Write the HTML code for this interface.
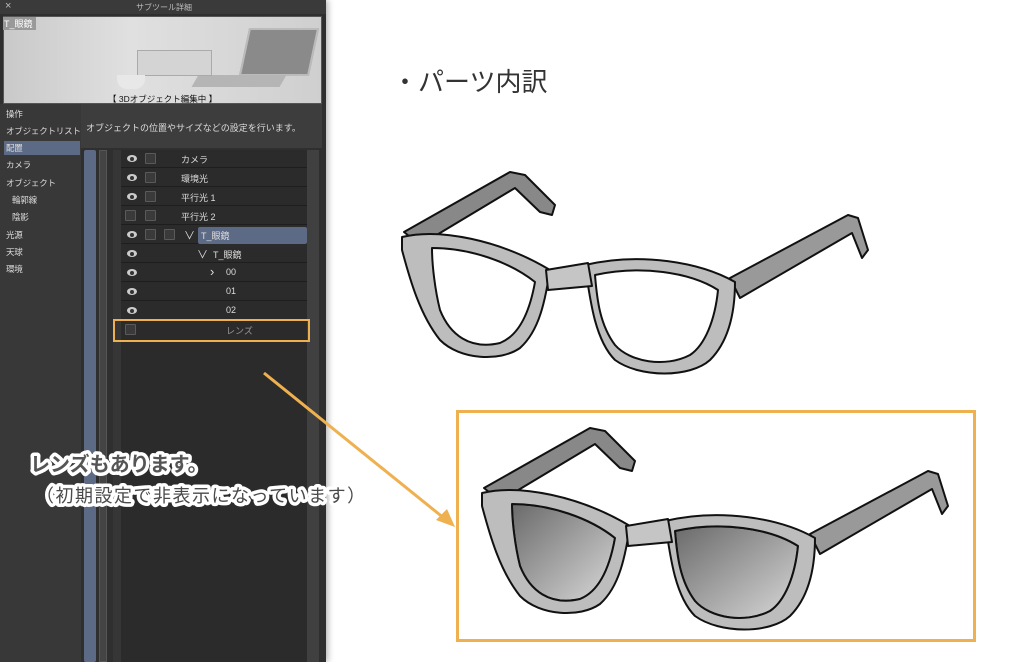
<!DOCTYPE html>
<html><head><meta charset="utf-8"><style>
*{margin:0;padding:0;box-sizing:border-box}
body{width:1024px;height:662px;overflow:hidden;background:#fff;position:relative;font-family:"Liberation Sans","Noto Sans CJK JP",sans-serif}
.abs{position:absolute}
.panel{left:0;top:0;width:326px;height:662px;background:#2f2f2f;box-shadow:2px 0 6px rgba(0,0,0,.3)}
.t{color:#ddd;font-size:9px;white-space:nowrap}
.row{position:absolute;left:121px;width:186px;height:18px;background:#2b2b2b;border-bottom:1px solid #1e1e1e}
.eye{position:absolute;top:5px;width:10px;height:7px;border-radius:50%;background:#ccc;left:6px}
.eye:after{content:"";position:absolute;left:3px;top:1.5px;width:4px;height:4px;border-radius:50%;background:#333}
.cb{position:absolute;top:3px;width:11px;height:11px;border:1px solid #5a5a5a;background:#3a3a3a;border-radius:1px}
.lbl{position:absolute;top:3px;color:#ddd;font-size:9px}
.nav{position:absolute;left:6px;color:#ddd;font-size:8.5px;white-space:nowrap;letter-spacing:-0.2px}
</style></head><body>
<div class="abs panel"></div>
<div class="abs" style="left:0;top:0;width:326px;height:14px;background:#3a3a3a"></div>
<div class="abs t" style="left:5px;top:0px;font-size:11px;color:#bbb">×</div>
<div class="abs t" style="left:136px;top:2px;color:#bbb;font-size:8px">サブツール詳細</div>
<div class="abs" style="left:3px;top:16px;width:319px;height:88px;background:linear-gradient(90deg,#c9c9c9,#e0e0e0 40%,#cfcfcf);border:1px solid #555"></div>
<div class="abs" style="left:244px;top:28px;width:70px;height:48px;background:#8a8a8a;transform:skewX(-12deg);border:2px solid #bbb"></div>
<div class="abs" style="left:195px;top:75px;width:88px;height:12px;background:#b5b5b5;transform:skewX(-30deg)"></div>
<div class="abs" style="left:137px;top:50px;width:75px;height:26px;background:#d4d4d4;border:1px solid #aaa"></div>
<div class="abs" style="left:117px;top:75px;width:28px;height:14px;background:#e8e8e8;border-radius:0 0 10px 10px"></div>
<div class="abs" style="left:3px;top:17px;width:33px;height:13px;background:#999;color:#fff;font-size:9px;padding-left:1px">T_眼鏡</div>
<div class="abs" style="left:108px;top:93px;font-size:8.5px;color:#111">【 3Dオブジェクト編集中 】</div>
<div class="abs" style="left:0;top:104px;width:81px;height:558px;background:#383838"></div>
<div class="nav" style="top:108px">操作</div>
<div class="nav" style="top:125px">オブジェクトリスト</div>
<div class="abs" style="left:4px;top:141px;width:76px;height:14px;background:#5d6a86"></div>
<div class="nav" style="top:142px">配置</div>
<div class="nav" style="top:159px">カメラ</div>
<div class="nav" style="top:177px">オブジェクト</div>
<div class="nav" style="top:194px;left:12px">輪郭線</div>
<div class="nav" style="top:211px;left:12px">陰影</div>
<div class="nav" style="top:229px">光源</div>
<div class="nav" style="top:246px">天球</div>
<div class="nav" style="top:263px">環境</div>
<div class="abs" style="left:81px;top:104px;width:241px;height:44px;background:#3d3d3d"></div>
<div class="abs t" style="left:86px;top:121px">オブジェクトの位置やサイズなどの設定を行います。</div>
<div class="abs" style="left:84px;top:150px;width:12px;height:512px;background:#5d6a86;border-radius:2px"></div>
<div class="abs" style="left:99px;top:150px;width:8px;height:512px;background:#444;border:1px solid #555"></div>
<div class="abs" style="left:113px;top:150px;width:8px;height:512px;background:#363636"></div>
<div class="abs" style="left:307px;top:150px;width:12px;height:512px;background:#404040"></div>
<div class="abs" style="left:121px;top:150px;width:186px;height:512px;background:#2b2b2b"></div>
<div class="row" style="top:150px"><div class="eye"></div><div class="cb" style="left:24px"></div><div class="lbl" style="left:60px">カメラ</div></div>
<div class="row" style="top:169px"><div class="eye"></div><div class="cb" style="left:24px"></div><div class="lbl" style="left:60px">環境光</div></div>
<div class="row" style="top:188px"><div class="eye"></div><div class="cb" style="left:24px"></div><div class="lbl" style="left:60px">平行光 1</div></div>
<div class="row" style="top:207px"><div class="cb" style="left:4px"></div><div class="cb" style="left:24px"></div><div class="lbl" style="left:60px">平行光 2</div></div>
<div class="row" style="top:226px"><div class="eye"></div><div class="cb" style="left:24px"></div><div class="cb" style="left:43px"></div><div class="lbl" style="left:63px;top:1px;font-size:11px">∨</div><div style="position:absolute;left:77px;top:1px;width:109px;height:17px;background:#5d6a86;border-radius:2px"></div><div class="lbl" style="left:80px">T_眼鏡</div></div>
<div class="row" style="top:245px"><div class="eye"></div><div class="lbl" style="left:76px;top:1px;font-size:11px">∨</div><div class="lbl" style="left:92px">T_眼鏡</div></div>
<div class="row" style="top:264px"><div class="eye"></div><div class="lbl" style="left:89px;top:0px;font-size:13px">›</div><div class="lbl" style="left:105px">00</div></div>
<div class="row" style="top:283px"><div class="eye"></div><div class="lbl" style="left:105px">01</div></div>
<div class="row" style="top:302px"><div class="eye"></div><div class="lbl" style="left:105px">02</div></div>
<div class="row" style="top:321px;border:none"><div class="cb" style="left:4px"></div><div class="lbl" style="left:105px;color:#999">レンズ</div></div>
<div class="abs" style="left:113px;top:319px;width:197px;height:23px;border:2.5px solid #efb04f"></div>
<div class="abs" style="left:392px;top:62px;font-size:26px;color:#333">・パーツ内訳</div>
<div class="abs" style="left:456px;top:410px;width:520px;height:232px;border:3px solid #efb04f"></div>
<svg class="abs" style="left:0;top:0" width="1024" height="662">
<g font-family="Liberation Sans, Noto Sans CJK JP, sans-serif" stroke="#fff" stroke-width="7" stroke-linejoin="round" paint-order="stroke" fill="#4a4a4a">
<text x="30" y="471" font-size="20" font-weight="bold" fill="#555">レンズもあります。</text>
<text x="36" y="502" font-size="18" letter-spacing="1.5">（初期設定で非表示になっています）</text>
</g>
<line x1="264" y1="373" x2="450" y2="523" stroke="#efb04f" stroke-width="3"/>
<polygon points="455,527 436,520 447,509" fill="#efb04f"/>
<defs><linearGradient id="ln" x1="0" y1="0" x2="1" y2="1"><stop offset="0" stop-color="#6a6a6a"/><stop offset="1" stop-color="#d8d8d8"/></linearGradient></defs>
<g stroke="#111" stroke-width="2" stroke-linejoin="round">
<polygon points="404,232 510,172 525,175 555,205 552,215 540,212 515,188 420,245" fill="#888"/>
<polygon points="730,278 848,215 858,218 868,250 862,258 852,233 740,298" fill="#999"/>
<path fill-rule="evenodd" fill="#bdbdbd" d="M402,237 C440,228 500,240 550,270 C545,300 540,330 520,348 C500,362 460,360 440,340 C420,315 410,280 402,250 Z M432,248 C470,248 510,262 535,282 C530,310 520,335 500,343 C470,350 450,335 440,310 C435,290 432,265 432,248Z"/>
<path fill-rule="evenodd" fill="#bdbdbd" d="M585,265 C640,252 700,262 735,282 C735,310 730,340 710,360 C690,378 640,378 615,360 C595,340 590,300 585,265Z M595,275 C640,265 690,272 718,290 C715,320 705,345 690,355 C665,368 630,362 615,345 C600,325 597,300 595,275Z"/>
<path fill="#c5c5c5" d="M546,270 L588,263 L592,286 L548,290Z"/>
</g>
<g transform="translate(80,256)" stroke="#111" stroke-width="2" stroke-linejoin="round">
<path fill="url(#ln)" d="M432,248 C470,248 510,262 535,282 C530,310 520,335 500,343 C470,350 450,335 440,310 C435,290 432,265 432,248Z"/>
<path fill="url(#ln)" d="M595,275 C640,265 690,272 718,290 C715,320 705,345 690,355 C665,368 630,362 615,345 C600,325 597,300 595,275Z"/>
<polygon points="404,232 510,172 525,175 555,205 552,215 540,212 515,188 420,245" fill="#888"/>
<polygon points="730,278 848,215 858,218 868,250 862,258 852,233 740,298" fill="#999"/>
<path fill-rule="evenodd" fill="#bdbdbd" d="M402,237 C440,228 500,240 550,270 C545,300 540,330 520,348 C500,362 460,360 440,340 C420,315 410,280 402,250 Z M432,248 C470,248 510,262 535,282 C530,310 520,335 500,343 C470,350 450,335 440,310 C435,290 432,265 432,248Z"/>
<path fill-rule="evenodd" fill="#bdbdbd" d="M585,265 C640,252 700,262 735,282 C735,310 730,340 710,360 C690,378 640,378 615,360 C595,340 590,300 585,265Z M595,275 C640,265 690,272 718,290 C715,320 705,345 690,355 C665,368 630,362 615,345 C600,325 597,300 595,275Z"/>
<path fill="#c5c5c5" d="M546,270 L588,263 L592,286 L548,290Z"/>
</g>
</svg>
</body></html>
